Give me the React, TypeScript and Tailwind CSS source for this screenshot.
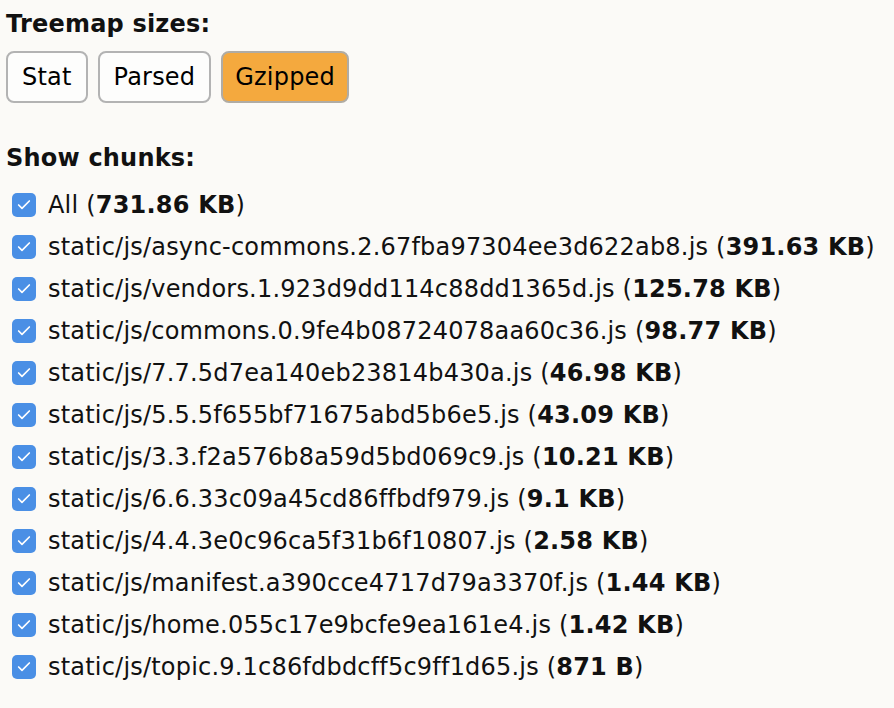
import { Check } from "lucide-react";

type Chunk = { label: string; size: string };

const chunks: Chunk[] = [
  { label: "All", size: "731.86 KB" },
  { label: "static/js/async-commons.2.67fba97304ee3d622ab8.js", size: "391.63 KB" },
  { label: "static/js/vendors.1.923d9dd114c88dd1365d.js", size: "125.78 KB" },
  { label: "static/js/commons.0.9fe4b08724078aa60c36.js", size: "98.77 KB" },
  { label: "static/js/7.7.5d7ea140eb23814b430a.js", size: "46.98 KB" },
  { label: "static/js/5.5.5f655bf71675abd5b6e5.js", size: "43.09 KB" },
  { label: "static/js/3.3.f2a576b8a59d5bd069c9.js", size: "10.21 KB" },
  { label: "static/js/6.6.33c09a45cd86ffbdf979.js", size: "9.1 KB" },
  { label: "static/js/4.4.3e0c96ca5f31b6f10807.js", size: "2.58 KB" },
  { label: "static/js/manifest.a390cce4717d79a3370f.js", size: "1.44 KB" },
  { label: "static/js/home.055c17e9bcfe9ea161e4.js", size: "1.42 KB" },
  { label: "static/js/topic.9.1c86fdbdcff5c9ff1d65.js", size: "871 B" },
];

const sizes = ["Stat", "Parsed", "Gzipped"];

function SizeButton({ label, active }: { label: string; active: boolean }) {
  return (
    <button
      className={
        active
          ? "h-[52px] px-[12px] rounded-lg border-2 border-[#b0aca4] bg-[#f4a93e] text-black"
          : "h-[52px] px-[14px] rounded-lg border-2 border-[#b3b3b3] bg-[#fdfdfc] text-black"
      }
    >
      {label}
    </button>
  );
}

function ChunkRow({ item }: { item: Chunk }) {
  return (
    <div className="flex items-center h-[42px]">
      <span className="ml-[6px] mr-[12px] flex h-6 w-6 shrink-0 items-center justify-center rounded-[5px] bg-[#4a8fe5]">
        <Check className="h-4 w-4 text-white" strokeWidth={2.5} />
      </span>
      <span className="whitespace-nowrap">
        {item.label} (<b className="font-bold">{item.size}</b>)
      </span>
    </div>
  );
}

export default function App() {
  return (
    <div
      className="min-h-[708px] w-[894px] bg-[#fbfaf7] pl-[6px] pt-[8px] text-[24px] tracking-[0.2px] text-[#111]"
      style={{ fontFamily: "Verdana, 'DejaVu Sans', sans-serif" }}
    >
      <div className="font-bold leading-[32px]">Treemap sizes:</div>
      <div className="mt-[11px] flex gap-[10px]">
        {sizes.map((s) => (
          <SizeButton key={s} label={s} active={s === "Gzipped"} />
        ))}
      </div>
      <div className="mt-[39px] font-bold leading-[32px]">Show chunks:</div>
      <div className="mt-[10px] flex flex-col">
        {chunks.map((c) => (
          <ChunkRow key={c.label} item={c} />
        ))}
      </div>
    </div>
  );
}
